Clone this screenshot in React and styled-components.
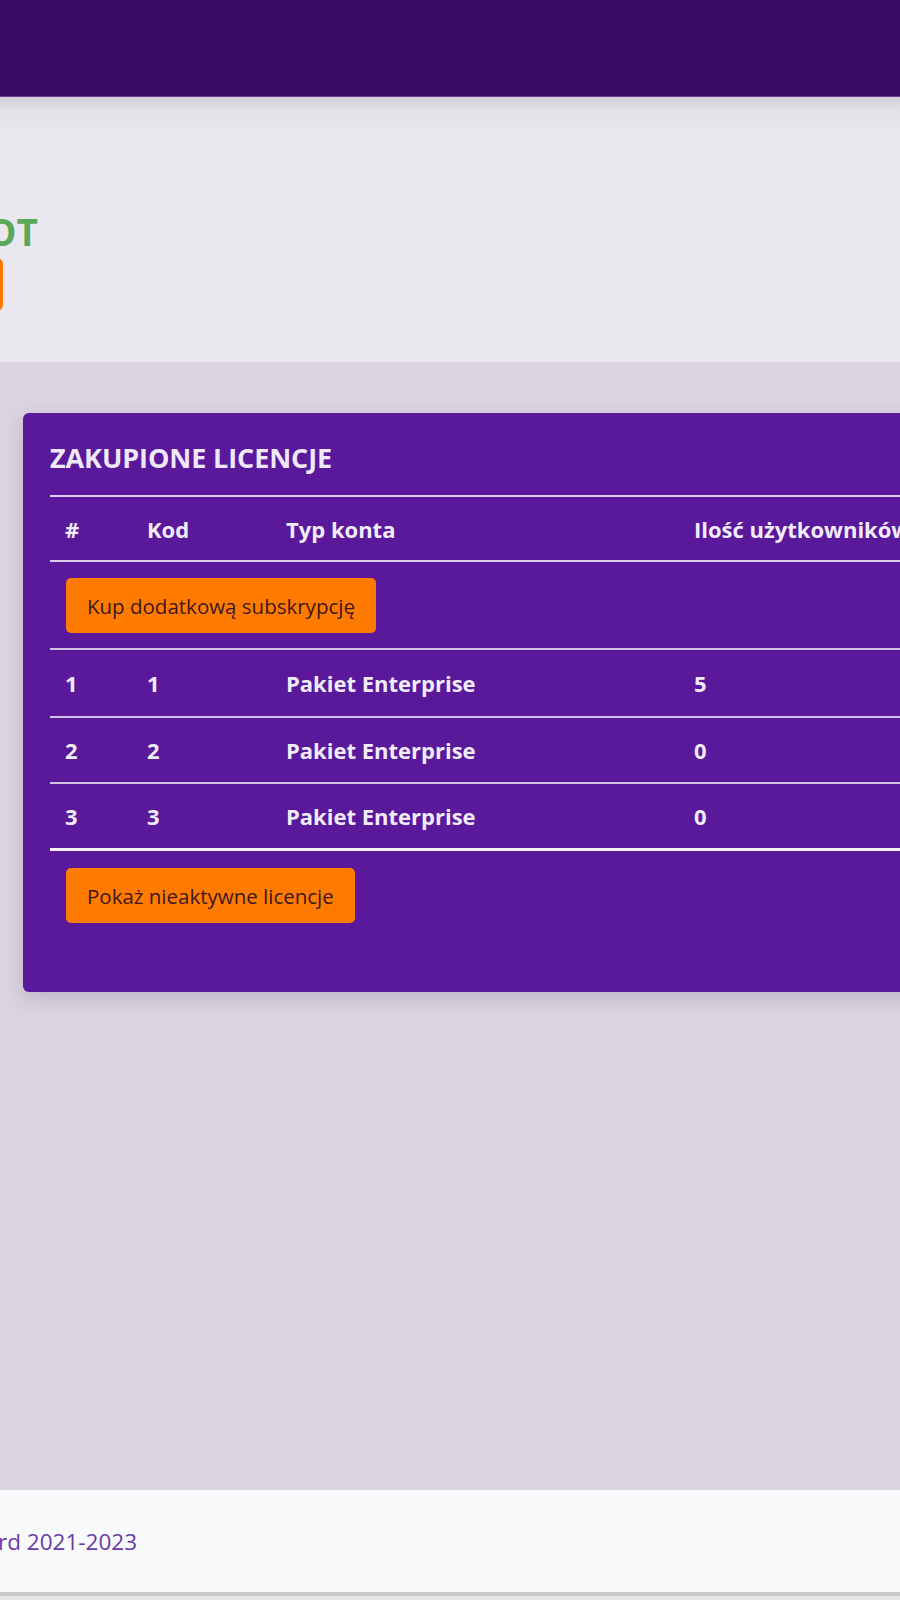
import React from "react";
import styled, { createGlobalStyle } from "styled-components";

const GlobalStyle = createGlobalStyle`
  html, body {
    margin: 0;
    padding: 0;
    overflow: hidden;
    background: #e8e8e8;
  }
  body {
    font-family: "Open Sans", "Noto Sans", sans-serif;
  }
`;

const Page = styled.div`
  width: 900px;
  overflow: hidden;
`;

const TopBar = styled.header`
  height: 96px;
  background: #3b0a66;
  border-bottom: 1px solid #6a3f92;
`;

const Hero = styled.section`
  height: 265px;
  background: linear-gradient(#d2ced6 0px, #e4e0e8 14px, #ebe7ef 40px, #ebe7ef 100%);
  display: flex;
  flex-direction: column;
  align-items: flex-start;
  padding-top: 113px;
  box-sizing: border-box;
`;

const HeroTitle = styled.h1`
  margin: 0 0 0 -262px;
  width: 300px;
  text-align: right;
  font-size: 37px;
  line-height: 44px;
  font-weight: 700;
  color: #5aa957;
  white-space: nowrap;
`;

const HeroButton = styled.div`
  margin: 4px 0 0 -197px;
  width: 200px;
  height: 53px;
  border-radius: 6px;
  background: #ff7b00;
`;

const Main = styled.main`
  height: 1128px;
  background: #dad4e0;
  padding: 51px 0 0 23px;
  box-sizing: border-box;
`;

const Card = styled.div`
  width: 1100px;
  height: 579px;
  box-sizing: border-box;
  background: #5a189a;
  border-radius: 6px;
  box-shadow: 0 6px 18px rgba(60, 30, 90, 0.18);
  padding: 28px 0 0 27px;
`;

const CardTitle = styled.h2`
  margin: 0 0 20px;
  font-size: 27px;
  line-height: 34px;
  font-weight: 700;
  color: #efe8fa;
  letter-spacing: -0.1px;
`;

const Table = styled.table`
  width: 1050px;
  border-collapse: collapse;
  color: #f1ecfa;
  font-size: 22px;
  font-weight: 700;
`;

const HeadCell = styled.th`
  text-align: left;
  height: 65px;
  padding: 0 0 0 15px;
  width: ${(p) => p.w || "auto"};
  border-top: 2px solid #d9cdeb;
  border-bottom: 2px solid #d9cdeb;
  box-sizing: border-box;
`;

const Row = styled.tr`
  border-bottom: ${(p) => (p.last ? "3px solid #f4f0fa" : "2px solid #cfc2e4")};
`;

const Cell = styled.td`
  padding: 0 0 0 15px;
  height: ${(p) => p.h || "64px"};
`;

const ButtonCell = styled.td`
  padding: 16px 0 15px 16px;
`;

const OrangeButton = styled.button`
  display: inline-block;
  height: 55px;
  padding: 0 21px;
  border: none;
  border-radius: 5px;
  background: #ff7b00;
  color: #3d1820;
  font-family: "Open Sans", "Noto Sans", sans-serif;
  font-size: 20.5px;
  font-weight: 400;
  cursor: pointer;
`;

const Below = styled.div`
  padding: 17px 0 0 16px;
`;

const Footer = styled.footer`
  height: 102px;
  background: #f9fafc;
  display: flex;
  align-items: center;
`;

const FooterText = styled.div`
  margin-left: -263px;
  width: 400px;
  text-align: right;
  font-size: 22.5px;
  color: #6a3aa6;
  white-space: nowrap;
`;

const BottomEdge = styled.div`
  height: 4px;
  background: #c9c9c9;
`;

const licences = [
  { id: 1, code: 1, type: "Pakiet Enterprise", users: 5 },
  { id: 2, code: 2, type: "Pakiet Enterprise", users: 0 },
  { id: 3, code: 3, type: "Pakiet Enterprise", users: 0 },
];

export default function App() {
  return (
    <Page>
      <GlobalStyle />
      <TopBar />
      <Hero>
        <HeroTitle>KONTO PILOT</HeroTitle>
        <HeroButton />
      </Hero>
      <Main>
        <Card>
          <CardTitle>ZAKUPIONE LICENCJE</CardTitle>
          <Table>
            <thead>
              <tr>
                <HeadCell w="82px">#</HeadCell>
                <HeadCell w="139px">Kod</HeadCell>
                <HeadCell w="408px">Typ konta</HeadCell>
                <HeadCell>Ilość użytkowników</HeadCell>
              </tr>
            </thead>
            <tbody>
              <Row>
                <ButtonCell colSpan={4}>
                  <OrangeButton>Kup dodatkową subskrypcję</OrangeButton>
                </ButtonCell>
              </Row>
              {licences.map((l, i) => (
                <Row key={l.id} last={i === licences.length - 1}>
                  <Cell h={i === 0 ? "66px" : "64px"}>{l.id}</Cell>
                  <Cell>{l.code}</Cell>
                  <Cell>{l.type}</Cell>
                  <Cell>{l.users}</Cell>
                </Row>
              ))}
            </tbody>
          </Table>
          <Below>
            <OrangeButton>Pokaż nieaktywne licencje</OrangeButton>
          </Below>
        </Card>
      </Main>
      <Footer>
        <FooterText>© Cloudboard 2021-2023</FooterText>
      </Footer>
      <BottomEdge />
    </Page>
  );
}
